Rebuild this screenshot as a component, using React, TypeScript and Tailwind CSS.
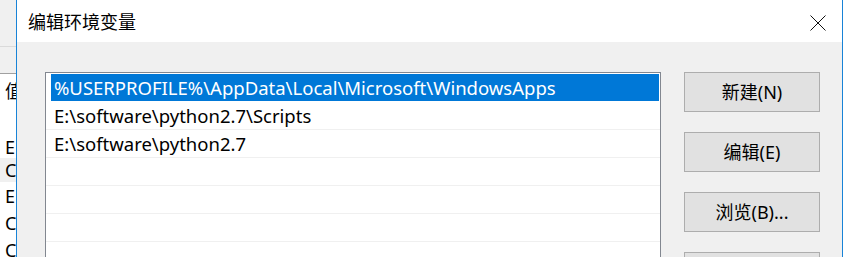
export default function App() {
  const paths = [
    "%USERPROFILE%\\AppData\\Local\\Microsoft\\WindowsApps",
    "E:\\software\\python2.7\\Scripts",
    "E:\\software\\python2.7",
    "",
    "",
    "",
    "",
  ]
  const buttons = ["新建(N)", "编辑(E)", "浏览(B)...", "删除(D)"]
  const font = { fontFamily: '"Noto Sans", "Noto Sans CJK SC", sans-serif' }

  return (
    <div className="flex w-[843px] h-[257px] overflow-hidden bg-white text-black" style={font}>
      {/* window behind the dialog */}
      <div className="w-[16px] shrink-0 flex flex-col overflow-hidden text-[18px] leading-none">
        <div className="h-[47px] bg-[#f0f0f0] border-b border-[#dadada] shrink-0" />
        <div className="h-[27px] bg-[#f0f0f0] border-b border-[#a0a0a0] shrink-0" />
        <div className="h-[26px] shrink-0 flex items-center pl-[5px] whitespace-nowrap mt-[4px]">值</div>
        <div className="h-[32px] shrink-0" />
        <div className="h-[22px] shrink-0 flex items-center pl-[5px]">E</div>
        <div className="h-[24px] shrink-0 flex items-center pl-[5px] bg-[#f0f0f0]">C</div>
        <div className="h-[27px] shrink-0 flex items-center pl-[5px]">E</div>
        <div className="h-[27px] shrink-0 flex items-center pl-[5px]">C</div>
        <div className="h-[27px] shrink-0 flex items-center pl-[5px]">C</div>
      </div>

      {/* dialog */}
      <div className="flex-1 flex flex-col border-l border-r border-[#1883d7] min-w-0">
        <div className="h-[42px] shrink-0 bg-white flex items-center justify-between pl-[11px] pr-[16px]">
          <span className="text-[18px] leading-none" style={{ fontFamily: '"Noto Sans CJK SC", sans-serif' }}>
            编辑环境变量
          </span>
          <svg width="16" height="16" viewBox="0 0 16 16" className="mt-[4px]">
            <path d="M0.5 0.5 L15.5 15.5 M15.5 0.5 L0.5 15.5" stroke="#111" strokeWidth="1" fill="none" />
          </svg>
        </div>

        <div className="flex-1 bg-[#f0f0f0] flex pt-[30px] pl-[28px]">
          <div className="w-[616px] shrink-0 bg-white border border-[#828790] pt-[1px] overflow-hidden text-[18.5px]">
            {paths.map((p, i) => (
              <div
                key={i}
                className={
                  "h-[28px] flex " + (i === 0 ? "border-b border-white" : "border-b border-[#f0f0f0]")
                }
              >
                {i === 0 ? (
                  <div className="flex-1 ml-[5px] mr-[1px] bg-[#0078d7] text-white flex items-center pl-[3px] whitespace-nowrap">
                    {p}
                  </div>
                ) : (
                  <div className="flex-1 flex items-center pl-[8px] whitespace-nowrap">{p}</div>
                )}
              </div>
            ))}
          </div>

          <div className="ml-[23px] flex flex-col gap-[20px]">
            {buttons.map((b) => (
              <div
                key={b}
                className="w-[136px] h-[40px] shrink-0 bg-[#e1e1e1] border border-[#adadad] flex items-center justify-center text-[18px]"
              >
                {b}
              </div>
            ))}
          </div>
        </div>
      </div>
    </div>
  )
}
